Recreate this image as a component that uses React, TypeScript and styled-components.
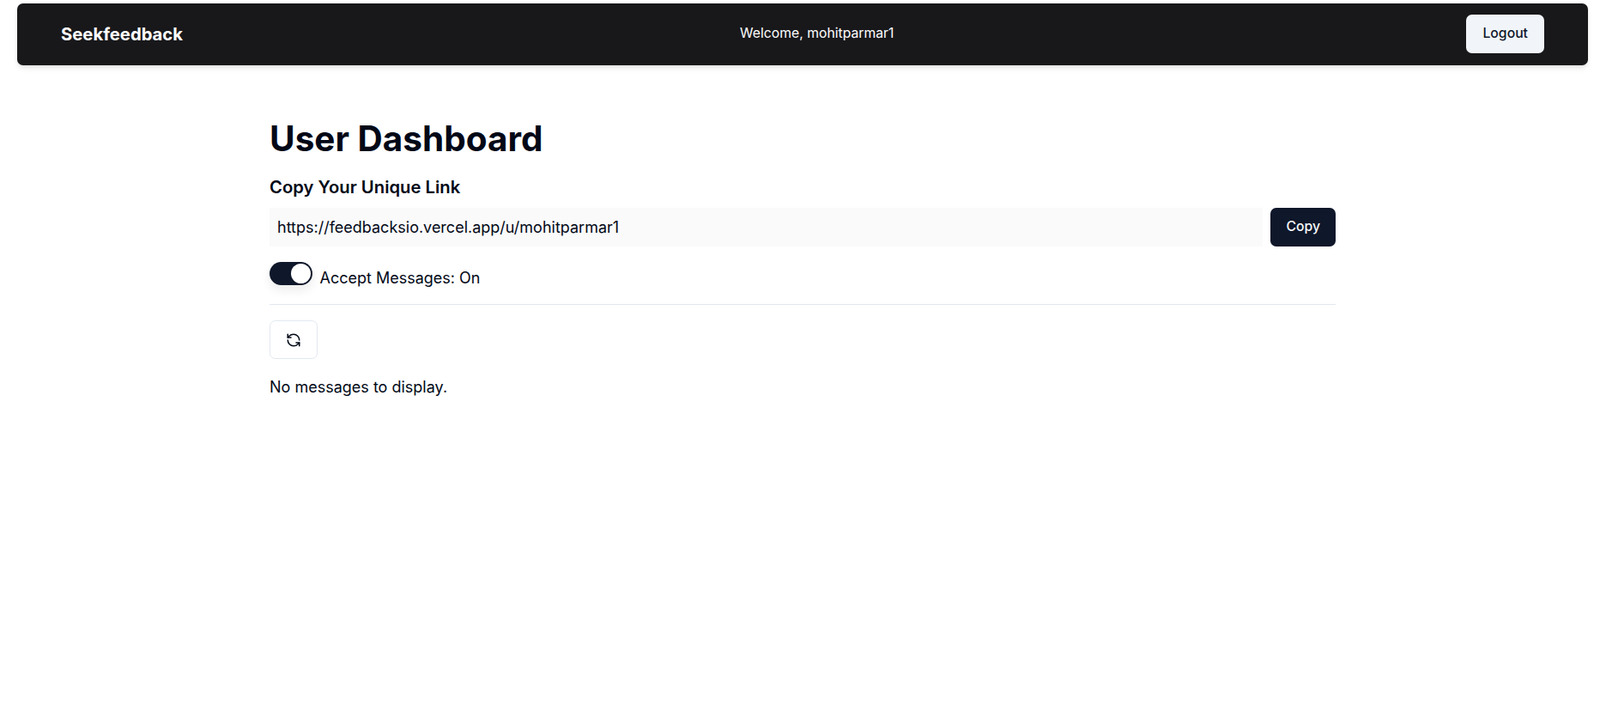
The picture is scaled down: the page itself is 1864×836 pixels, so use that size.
import React from "react";
import styled, { createGlobalStyle } from "styled-components";
import { RefreshCcw } from "lucide-react";

const Global = createGlobalStyle`
  html, body { margin: 0; padding: 0; background: #fff; }
  * { box-sizing: border-box; }
  body { font-family: Inter, "Liberation Sans", sans-serif; color: #020817; }
`;

const Page = styled.div`
  min-height: 836px;
  padding: 4px 14px 0 20px;
`;

const Nav = styled.nav`
  height: 72px;
  display: flex;
  align-items: center;
  justify-content: space-between;
  padding: 0 51px;
  background: #18181b;
  border-radius: 6.75px;
  box-shadow: 0 4px 7px -1px rgba(0, 0, 0, 0.1), 0 2px 4px -2px rgba(0, 0, 0, 0.1);
  color: #fff;
`;

const Logo = styled.a`
  font-size: 20.25px;
  font-weight: 700;
  color: #fff;
  margin-bottom: 2px;
`;

const Welcome = styled.span`
  font-size: 15.75px;
  margin-right: 18px;
  margin-bottom: 4px;
`;

const Button = styled.button`
  height: 45px;
  padding: 0 18px;
  border: none;
  border-radius: 6.75px;
  font-family: inherit;
  font-size: 15.75px;
  font-weight: 500;
  white-space: nowrap;
`;

const LogoutButton = styled(Button)`
  padding: 0 19px 2px;
  background: #f1f5f9;
  color: #0f172a;
  margin-bottom: 2px;
`;

const Main = styled.main`
  width: 1242px;
  margin: 63px auto 0;
`;

const Title = styled.h1`
  margin: 0 0 20px;
  font-size: 40.5px;
  line-height: 45px;
  font-weight: 700;
`;

const Section = styled.h2`
  margin: 0 0 10px;
  font-size: 20.25px;
  line-height: 28px;
  font-weight: 600;
`;

const LinkRow = styled.div`
  display: flex;
  gap: 9px;
  margin-bottom: 18px;
`;

const LinkInput = styled.input`
  flex: 1;
  min-width: 0;
  height: 45px;
  padding: 9px;
  border: none;
  outline: none;
  background: #fafafa;
  font-family: inherit;
  font-size: 18px;
  color: #020817;
`;

const CopyButton = styled(Button)`
  padding-bottom: 2px;
  background: #0f172a;
  color: #f8fafc;
`;

const SwitchRow = styled.div`
  display: flex;
  align-items: flex-start;
  margin-bottom: 17px;
`;

const Switch = styled.div`
  width: 49.5px;
  height: 27px;
  padding: 2px;
  border-radius: 999px;
  background: #0f172a;
  display: flex;
  justify-content: flex-end;
  box-shadow: 0 6px 12px rgba(0, 0, 0, 0.08);
`;

const Thumb = styled.span`
  width: 23px;
  height: 23px;
  border-radius: 50%;
  background: #fff;
`;

const SwitchLabel = styled.span`
  margin-left: 9px;
  margin-top: 5px;
  font-size: 18px;
  line-height: 27px;
`;

const Divider = styled.hr`
  margin: 0 0 18px;
  border: none;
  border-top: 1px solid #e2e8f0;
`;

const RefreshButton = styled.button`
  width: 56px;
  height: 45px;
  display: flex;
  align-items: center;
  justify-content: center;
  background: #fff;
  border: 1px solid #e2e8f0;
  border-radius: 6.75px;
  color: #020817;
  padding: 0;
`;

const Empty = styled.p`
  margin: 19px 0 0;
  font-size: 18px;
  line-height: 27px;
`;

export default function App() {
  return (
    <Page>
      <Global />
      <Nav>
        <Logo>Seekfeedback</Logo>
        <Welcome>Welcome, mohitparmar1</Welcome>
        <LogoutButton>Logout</LogoutButton>
      </Nav>
      <Main>
        <Title>User Dashboard</Title>
        <Section>Copy Your Unique Link</Section>
        <LinkRow>
          <LinkInput readOnly value="https://feedbacksio.vercel.app/u/mohitparmar1" />
          <CopyButton>Copy</CopyButton>
        </LinkRow>
        <SwitchRow>
          <Switch><Thumb /></Switch>
          <SwitchLabel>Accept Messages: On</SwitchLabel>
        </SwitchRow>
        <Divider />
        <RefreshButton><RefreshCcw size={18} strokeWidth={2} /></RefreshButton>
        <Empty>No messages to display.</Empty>
      </Main>
    </Page>
  );
}
